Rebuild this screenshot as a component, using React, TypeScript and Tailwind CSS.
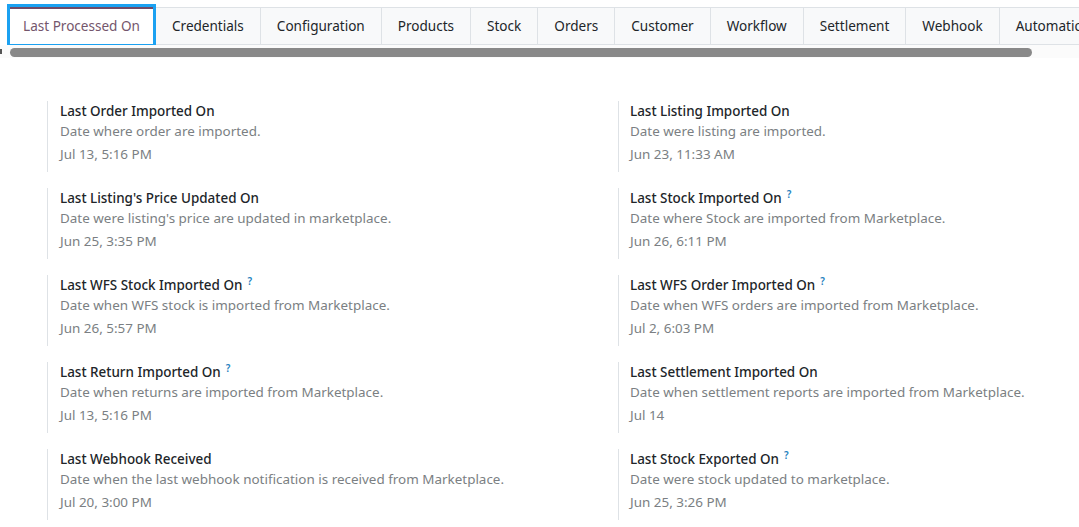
import React from "react";

const tabs = [
  "Credentials",
  "Configuration",
  "Products",
  "Stock",
  "Orders",
  "Customer",
  "Workflow",
  "Settlement",
  "Webhook",
  "Automation",
];

type Item = { title: string; help?: boolean; desc: string; date: string };

const left: Item[] = [
  { title: "Last Order Imported On", desc: "Date where order are imported.", date: "Jul 13, 5:16 PM" },
  { title: "Last Listing's Price Updated On", desc: "Date were listing's price are updated in marketplace.", date: "Jun 25, 3:35 PM" },
  { title: "Last WFS Stock Imported On", help: true, desc: "Date when WFS stock is imported from Marketplace.", date: "Jun 26, 5:57 PM" },
  { title: "Last Return Imported On", help: true, desc: "Date when returns are imported from Marketplace.", date: "Jul 13, 5:16 PM" },
  { title: "Last Webhook Received", desc: "Date when the last webhook notification is received from Marketplace.", date: "Jul 20, 3:00 PM" },
];

const right: Item[] = [
  { title: "Last Listing Imported On", desc: "Date were listing are imported.", date: "Jun 23, 11:33 AM" },
  { title: "Last Stock Imported On", help: true, desc: "Date where Stock are imported from Marketplace.", date: "Jun 26, 6:11 PM" },
  { title: "Last WFS Order Imported On", help: true, desc: "Date when WFS orders are imported from Marketplace.", date: "Jul 2, 6:03 PM" },
  { title: "Last Settlement Imported On", desc: "Date when settlement reports are imported from Marketplace.", date: "Jul 14" },
  { title: "Last Stock Exported On", help: true, desc: "Date were stock updated to marketplace.", date: "Jun 25, 3:26 PM" },
];

function Field({ item }: { item: Item }) {
  return (
    <div className="border-l border-[#dee2e6] pl-3 pb-[7px] mb-4">
      <div className="h-[21px] leading-[21px] text-[13.45px] font-medium text-[#212529]">
        {item.title}
        {item.help && (
          <sup className="ml-[5px] text-[10px] font-semibold text-[#1f82c0]">?</sup>
        )}
      </div>
      <div className="-mt-[1px] h-[21px] leading-[21px] text-[13.45px] text-[#7b7f83]">{item.desc}</div>
      <div className="mt-[2px] h-[21px] leading-[21px] text-[13.45px] text-[#7b7f83]">{item.date}</div>
    </div>
  );
}

export default function App() {
  return (
    <div
      className="w-[1079px] h-[527px] overflow-hidden bg-white"
      style={{ fontFamily: '"Noto Sans", "Open Sans", sans-serif' }}
    >
      {/* tab strip */}
      <div className="pt-[7px] w-[1079px] overflow-hidden">
        <div className="flex whitespace-nowrap text-[13.55px]">
          <div className="ml-[10px] mr-[3px] w-[143px] h-[37px] flex items-center justify-center bg-white border-t-2 border-[#714b67] text-[#74566c] outline-3 outline-[#1ba1f1] shrink-0">
            Last Processed On
          </div>
          {tabs.map((t) => (
            <div
              key={t}
              className="px-4 h-[38px] flex items-center bg-[#f8f9fa] border-t border-b border-r border-[#dee2e6] text-[#212529] shrink-0"
            >
              {t}
            </div>
          ))}
        </div>
      </div>

      {/* scrollbar */}
      <div className="relative h-[13px] bg-[#fbfbfb]">
        <div className="absolute left-0 top-[4px] w-[2px] h-[5px] bg-[#555]" />
        <div className="absolute left-[10px] top-[3px] w-[1022px] h-[9px] rounded-full bg-[#898989]" />
      </div>

      {/* fields */}
      <div className="grid grid-cols-[571px_1fr] pl-[47px] pt-[43px]">
        <div>
          {left.map((i) => (
            <Field key={i.title} item={i} />
          ))}
        </div>
        <div className="[&>div]:pl-[11px]">
          {right.map((i) => (
            <Field key={i.title} item={i} />
          ))}
        </div>
      </div>
    </div>
  );
}
